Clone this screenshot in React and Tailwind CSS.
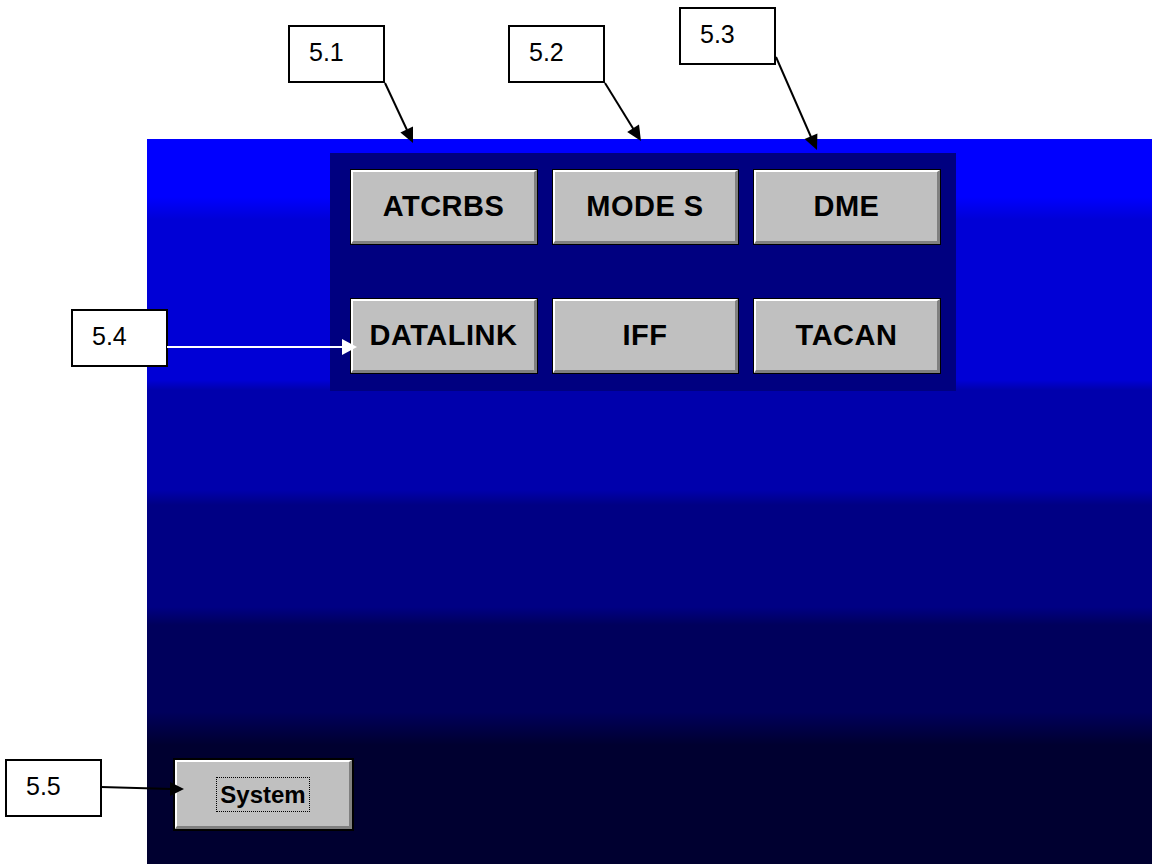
import React from 'react';

const font = { fontFamily: '"Liberation Sans", Arial, sans-serif' };

const modes = ['ATCRBS', 'MODE S', 'DME', 'DATALINK', 'IFF', 'TACAN'];

const callouts = [
	{ id: '5.1', cls: 'left-[288px] top-[25px]' },
	{ id: '5.2', cls: 'left-[508px] top-[25px]' },
	{ id: '5.3', cls: 'left-[679px] top-[7px]' },
	{ id: '5.4', cls: 'left-[71px] top-[309px]' },
	{ id: '5.5', cls: 'left-[5px] top-[759px]' },
];

const BevelButton = ({ label }) => {
	return (
		<div className="border border-black bg-[#c0c0c0]">
			<div className="h-full border-t-2 border-l-2 border-t-white border-l-white border-r-[3px] border-b-[3px] border-r-[#808080] border-b-[#808080] flex items-center justify-center">
				<span className="font-bold text-[29px] text-black leading-none tracking-[0.5px]">{label}</span>
			</div>
		</div>
	);
};

const Arrows = () => (
	<svg className="absolute inset-0 pointer-events-none" width="1152" height="864" viewBox="0 0 1152 864">
		{/* 5.1 */}
		<line x1="385" y1="83" x2="407" y2="130" stroke="black" strokeWidth="2" />
		<polygon points="413,143 413,126.4 400.4,132.4" fill="black" />
		{/* 5.2 */}
		<line x1="605" y1="83" x2="634" y2="130" stroke="black" strokeWidth="2" />
		<polygon points="641,141 639,124.6 627.2,132" fill="black" />
		{/* 5.3 */}
		<line x1="776" y1="57" x2="811" y2="137" stroke="black" strokeWidth="2" />
		<polygon points="817,150 817.4,133.5 804.6,139.1" fill="black" />
		{/* 5.4 */}
		<line x1="167" y1="347" x2="344" y2="347" stroke="white" strokeWidth="2" />
		<polygon points="357,347 342,339 342,355" fill="white" />
		{/* 5.5 */}
		<line x1="101" y1="787" x2="172" y2="789" stroke="black" strokeWidth="2" />
		<polygon points="184,789 170,782 170,796" fill="black" />
	</svg>
);

const App = () => {
	return (
		<div className="relative w-[1152px] h-[864px] bg-white overflow-hidden" style={font}>
			<div className="pl-[147px] pt-[139px]">
				<div className="h-[725px] flex flex-col bg-[linear-gradient(to_bottom,#0000ff_0px,#0000ff_58px,#0000d6_81px,#0000d6_241px,#0000ac_251px,#0000ac_351px,#000084_366px,#000084_468px,#00005c_486px,#00005c_573px,#000030_606px,#000030_100%)]">
					{/* mode panel */}
					<div className="ml-[183px] mt-[14px] w-[626px] h-[238px] bg-[#000080] pl-[20px] pt-[16px]">
						<div className="grid grid-cols-[188px_187px_188px] gap-x-[14px] gap-y-[53px] auto-rows-[76px]">
							{modes.map((m) => (
								<BevelButton key={m} label={m} />
							))}
						</div>
					</div>

					{/* system button */}
					<div className="mt-auto mb-[33px] ml-[26px] w-[181px] h-[73px] border-2 border-black bg-[#c0c0c0]">
						<div className="h-full border-t-2 border-l-2 border-t-white border-l-white border-r-[3px] border-b-[3px] border-r-[#808080] border-b-[#808080] flex items-center justify-center">
							<span className="inline-block border border-dotted border-black px-[3px] h-[35px] leading-[33px] font-bold text-[24px] text-black">
								System
							</span>
						</div>
					</div>
				</div>
			</div>

			{callouts.map((c) => (
				<div
					key={c.id}
					className={`absolute ${c.cls} w-[97px] h-[58px] border-2 border-black bg-white flex items-center pl-[19px] pb-[3px]`}
				>
					<span className="text-[25px] text-black leading-none">{c.id}</span>
				</div>
			))}

			<Arrows />
		</div>
	);
};

export default App;
